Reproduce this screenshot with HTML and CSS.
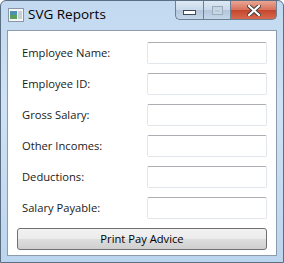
FILE: index.html
```html
<!DOCTYPE html>
<html>
<head>
    <title>SVG Reports</title>
    <link rel="stylesheet" href="styles.css">
</head>
<body>
    <div class="window">
        <div class="titlebar">
            <svg class="app-icon" width="16" height="14" viewBox="0 0 16 14">
                <rect x="0.5" y="0.5" width="15" height="13" fill="#f4f6f8" stroke="#8a96a4"/>
                <rect x="2" y="3" width="7" height="8" fill="#4f8fb0"/>
                <rect x="2" y="7" width="7" height="4" fill="#5aa05a"/>
                <rect x="10" y="3" width="4" height="8" fill="#c8d0d8"/>
            </svg>
            <span class="title">SVG Reports</span>
            <div class="caption-buttons">
                <div class="cap-btn minimize"><span class="min-glyph"></span></div>
                <div class="cap-btn maximize"><span class="max-glyph"></span></div>
                <div class="cap-btn close">
                    <svg width="14" height="11" viewBox="0 0 14 11">
                        <path d="M2 1 L12 10 M12 1 L2 10" stroke="#3a3a3a" stroke-width="4" stroke-linecap="square"/>
                        <path d="M2 1 L12 10 M12 1 L2 10" stroke="#ffffff" stroke-width="2.2" stroke-linecap="square"/>
                    </svg>
                </div>
            </div>
        </div>

        <div class="client">
            <div class="form">
                <label class="label">Employee Name:</label>
                <input class="field" type="text">
                <label class="label">Employee ID:</label>
                <input class="field" type="text">
                <label class="label">Gross Salary:</label>
                <input class="field" type="text">
                <label class="label">Other Incomes:</label>
                <input class="field" type="text">
                <label class="label">Deductions:</label>
                <input class="field" type="text">
                <label class="label">Salary Payable:</label>
                <input class="field" type="text">
            </div>
            <button class="print-button">Print Pay Advice</button>
        </div>
    </div>
</body>
</html>
```

FILE: styles.css
```css
body {
    margin: 0;
    font-family: "Open Sans", "Noto Sans", sans-serif;
    background-color: #ffffff;
}

.window {
    width: 284px;
    height: 263px;
    box-sizing: border-box;
    border: 1px solid #5b6e82;
    border-radius: 6px 6px 0 0;
    background: linear-gradient(to bottom, #c2d9f0 0%, #cfe2f5 40%, #bcd5ee 100%);
    display: flex;
    flex-direction: column;
    overflow: hidden;
}

.titlebar {
    height: 28px;
    display: flex;
    align-items: flex-start;
    flex-shrink: 0;
}

.app-icon {
    margin: 7px 0 0 7px;
}

.title {
    margin: 4px 0 0 4px;
    font-size: 13.5px;
    color: #000;
}

.caption-buttons {
    margin-left: auto;
    margin-right: 6px;
    display: flex;
}

.cap-btn {
    height: 18px;
    border: 1px solid #6d7f92;
    border-top: none;
    display: flex;
    align-items: center;
    justify-content: center;
    box-sizing: content-box;
}

.minimize {
    width: 27px;
    border-right: none;
    border-radius: 0 0 0 5px;
    background: linear-gradient(to bottom, #dce8f4 0%, #c9d9ea 50%, #b3c6da 51%, #c4d6e8 100%);
}

.maximize {
    width: 26px;
    border-right: none;
    background: linear-gradient(to bottom, #dce8f4 0%, #c9d9ea 50%, #b3c6da 51%, #c4d6e8 100%);
}

.close {
    width: 45px;
    border-radius: 0 0 5px 0;
    background: linear-gradient(to bottom, #e8a694 0%, #d8705a 50%, #c4462c 51%, #d66a50 100%);
}

.min-glyph {
    width: 11px;
    height: 3px;
    margin-top: 5px;
    background: #fff;
    border: 1px solid #3d4a58;
}

.max-glyph {
    width: 9px;
    height: 7px;
    border: 1px solid #9aabbd;
    box-shadow: inset 0 0 0 2px #c8d6e4;
}

.client {
    margin: 1px 6px 0 6px;
    height: 226px;
    box-sizing: border-box;
    background-color: #fff;
    border: 1px solid #8d9cab;
    padding: 11px 9px 0 9px;
}

.form {
    display: grid;
    grid-template-columns: 1fr 120px;
    row-gap: 9px;
    margin-bottom: 7px;
}

.label {
    font-size: 11.2px;
    color: #1a1a1a;
    padding-left: 5px;
    line-height: 22px;
}

.field {
    height: 22px;
    margin: 0;
    box-sizing: border-box;
    border: 1px solid #e2e7ed;
    border-top-color: #abadb3;
    border-radius: 2px;
    background: #fff;
}

.print-button {
    width: 100%;
    height: 22px;
    padding: 0;
    border: 1px solid #707070;
    border-radius: 3px;
    background: linear-gradient(to bottom, #f2f2f2 0%, #ebebeb 50%, #dddddd 51%, #cfcfcf 100%);
    font-family: "Open Sans", "Noto Sans", sans-serif;
    font-size: 11.2px;
    color: #000;
}
```
